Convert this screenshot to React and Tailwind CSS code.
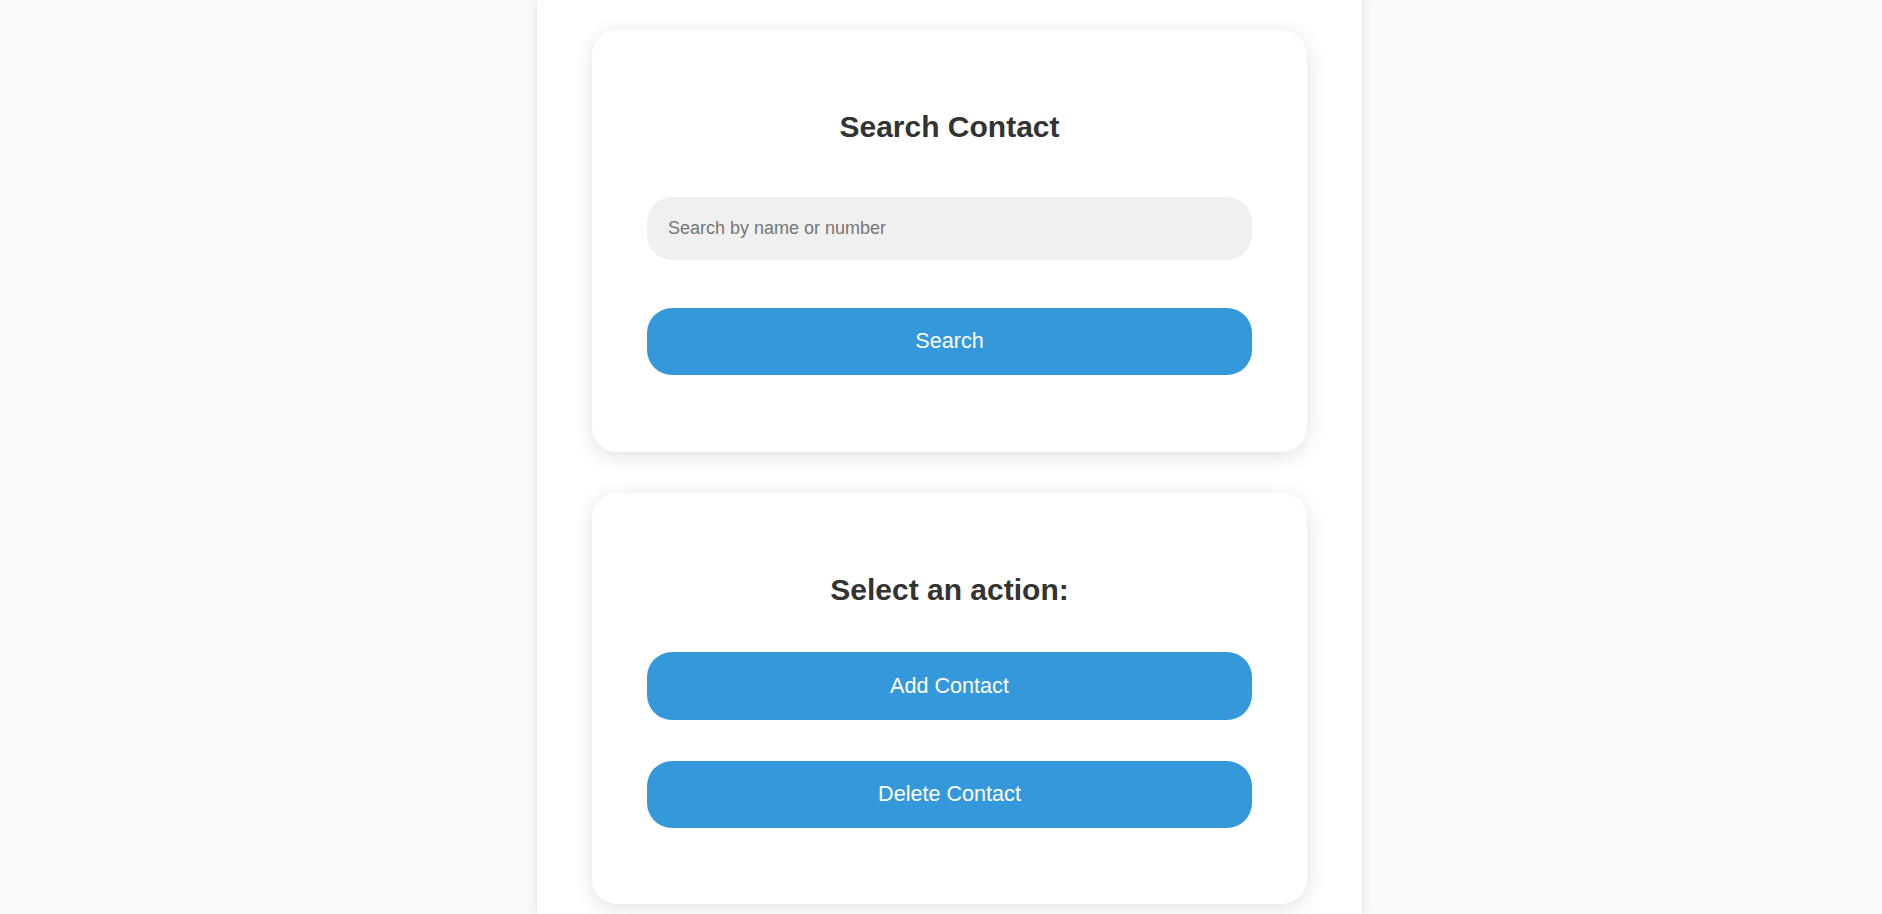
import React from 'react';

export default function App() {
  const btn =
    "w-full bg-[#3498db] text-white text-[21.6px] rounded-[25px] flex items-center justify-center";
  const card =
    "bg-white rounded-[25px] shadow-[0_4px_20px_rgba(0,0,0,0.12)] px-[55px] pt-[80px]";

  return (
    <div
      className="min-h-screen bg-[#f9f9f9] flex justify-center pl-[17px]"
      style={{ fontFamily: '"Liberation Sans", Arial, sans-serif' }}
    >
      <div className="w-[825px] min-h-screen bg-white shadow-[0_0_10px_rgba(0,0,0,0.1)] pt-[30px] px-[55px] flex flex-col gap-[41px]">
        <div className={`${card} pb-[77px]`}>
          <h2 className="text-[30px] leading-[34.5px] font-bold text-[#333] text-center">
            Search Contact
          </h2>
          <input
            type="text"
            placeholder="Search by name or number"
            className="mt-[52px] w-full h-[63px] rounded-[25px] bg-[#f0f0f0] pl-[21px] text-[18px] outline-none placeholder:text-[#757575]"
          />
          <button className={`${btn} mt-[48px] h-[67px]`}>Search</button>
        </div>

        <div className={`${card} pb-[76px]`}>
          <h2 className="text-[30px] leading-[34.5px] font-bold text-[#333] text-center">
            Select an action:
          </h2>
          <button className={`${btn} mt-[45px] h-[68px]`}>Add Contact</button>
          <button className={`${btn} mt-[41px] h-[67px]`}>Delete Contact</button>
        </div>
      </div>
    </div>
  );
}
